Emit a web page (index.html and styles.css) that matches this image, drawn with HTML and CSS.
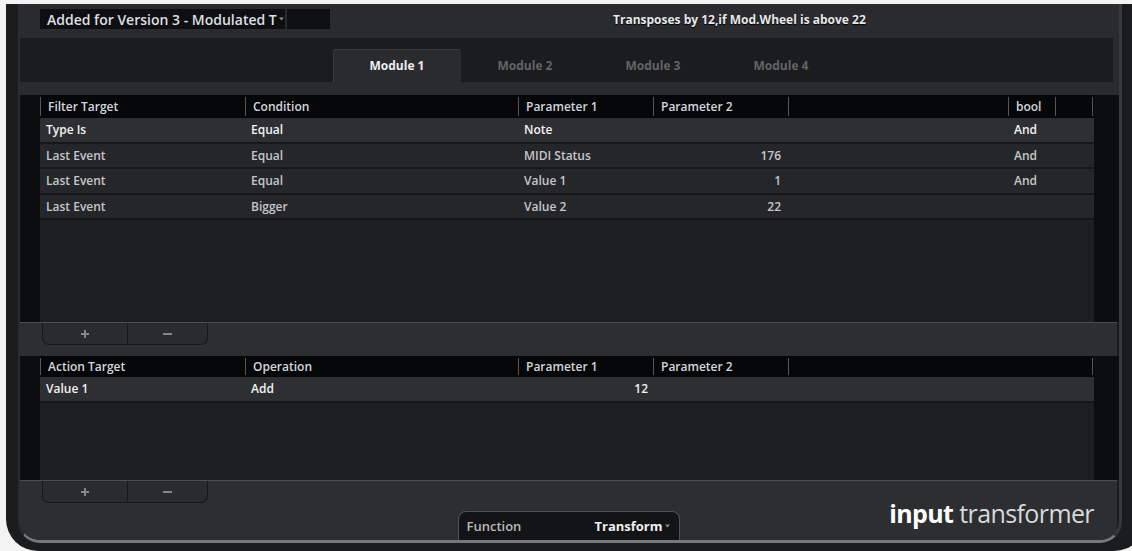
FILE: index.html
```html
<!DOCTYPE html>
<html>

<head>
    <title>Input Transformer</title>
    <meta content="width=device-width, initial-scale=1" name="viewport" />
    <meta http-equiv="Content-Type" content="text/html; charset=utf-8" />
    <link rel="stylesheet" href="styles.css">
</head>

<body>
    <div class="frame">
        <div class="panel">
            <div class="topbar">
                <div class="preset">
                    <span class="preset-name">Added for Version 3 - Modulated T</span>
                    <svg class="arrow" width="5" height="4" viewBox="0 0 5 4"><path d="M0 0.5h5L2.5 3.5z" fill="#8c8d90"/></svg>
                </div>
                <div class="preset-extra"></div>
                <div class="preset-info">Transposes by 12,if Mod.Wheel is above 22</div>
            </div>

            <div class="modules">
                <div class="tabs">
                    <div class="tab active">Module 1</div>
                    <div class="tab">Module 2</div>
                    <div class="tab">Module 3</div>
                    <div class="tab">Module 4</div>
                </div>
            </div>
            <div class="spacer"></div>

            <!-- filter conditions -->
            <div class="list filter">
                <div class="row head cols-filter">
                    <div class="cell">Filter Target</div>
                    <div class="cell">Condition</div>
                    <div class="cell">Parameter 1</div>
                    <div class="cell">Parameter 2</div>
                    <div class="cell"></div>
                    <div class="cell">bool</div>
                    <div class="cell last"></div>
                </div>
                <div class="body">
                    <div class="row item sel cols-filter">
                        <div class="cell">Type Is</div>
                        <div class="cell">Equal</div>
                        <div class="cell">Note</div>
                        <div class="cell num"></div>
                        <div class="cell"></div>
                        <div class="cell">And</div>
                        <div class="cell"></div>
                    </div>
                    <div class="row item cols-filter">
                        <div class="cell">Last Event</div>
                        <div class="cell">Equal</div>
                        <div class="cell">MIDI Status</div>
                        <div class="cell num">176</div>
                        <div class="cell"></div>
                        <div class="cell">And</div>
                        <div class="cell"></div>
                    </div>
                    <div class="row item cols-filter">
                        <div class="cell">Last Event</div>
                        <div class="cell">Equal</div>
                        <div class="cell">Value 1</div>
                        <div class="cell num">1</div>
                        <div class="cell"></div>
                        <div class="cell">And</div>
                        <div class="cell"></div>
                    </div>
                    <div class="row item cols-filter">
                        <div class="cell">Last Event</div>
                        <div class="cell">Bigger</div>
                        <div class="cell">Value 2</div>
                        <div class="cell num">22</div>
                        <div class="cell"></div>
                        <div class="cell"></div>
                        <div class="cell"></div>
                    </div>
                </div>
            </div>

            <div class="toolbar">
                <div class="btns">
                    <div class="btn">
                        <svg width="8" height="8" viewBox="0 0 8 8"><path d="M4 0v8M0 4h8" stroke="#85868a" stroke-width="2"/></svg>
                    </div>
                    <div class="btn minus">
                        <svg width="9" height="2" viewBox="0 0 9 2"><path d="M0 1h9" stroke="#85868a" stroke-width="2"/></svg>
                    </div>
                </div>
            </div>

            <!-- actions -->
            <div class="list action">
                <div class="row head cols-action">
                    <div class="cell">Action Target</div>
                    <div class="cell">Operation</div>
                    <div class="cell">Parameter 1</div>
                    <div class="cell">Parameter 2</div>
                    <div class="cell last"></div>
                </div>
                <div class="body">
                    <div class="row item sel short cols-action">
                        <div class="cell">Value 1</div>
                        <div class="cell">Add</div>
                        <div class="cell num tight">12</div>
                        <div class="cell"></div>
                        <div class="cell"></div>
                    </div>
                </div>
            </div>

            <div class="footer">
                <div class="btns">
                    <div class="btn">
                        <svg width="8" height="8" viewBox="0 0 8 8"><path d="M4 0v8M0 4h8" stroke="#85868a" stroke-width="2"/></svg>
                    </div>
                    <div class="btn minus">
                        <svg width="9" height="2" viewBox="0 0 9 2"><path d="M0 1h9" stroke="#85868a" stroke-width="2"/></svg>
                    </div>
                </div>
                <div class="func">
                    <span>Function</span>
                    <span class="func-value">Transform<svg class="arrow" width="5" height="4" viewBox="0 0 5 4"><path d="M0 0.5h5L2.5 3.5z" fill="#8c8d90"/></svg></span>
                </div>
                <div class="logo"><b>input</b> transformer</div>
            </div>
        </div>
    </div>
</body>

</html>
```

FILE: styles.css
```css
* {
    margin: 0;
    padding: 0;
    box-sizing: border-box;
}

html,
body {
    background: #f3f3f3;
    font-family: "Open Sans", "Liberation Sans", sans-serif;
    font-size: 12px;
    font-weight: 600;
    overflow: hidden;
}

.frame {
    background: #1b1c1e;
    border-radius: 0 0 32px 32px;
    height: 547px;
    margin: 4px 0 0 6px;
    padding: 0 0 8px 12px;
    width: 1140px;
}

.panel {
    border-bottom: 3px solid #77787b;
    border-left: 2px solid #2a2b2d;
    border-right: 3px solid #38393b;
    border-radius: 0 0 22px 22px;
    display: flex;
    flex-direction: column;
    height: 539px;
    overflow: hidden;
    width: 1104px;
}

/* preset bar */
.topbar {
    align-items: flex-start;
    background: #2a2b2e;
    display: flex;
    height: 34px;
    padding: 5px 0 0 20px;
}

.preset {
    align-items: center;
    background: #0e0f11;
    display: flex;
    height: 20px;
    padding-left: 7px;
    width: 245px;
}

.preset-name {
    color: #dedfe2;
    font-size: 14px;
    white-space: nowrap;
}

.arrow {
    margin-left: 2px;
}

.preset-extra {
    background: #0e0f11;
    height: 20px;
    margin-left: 2px;
    width: 43px;
}

.preset-info {
    color: #e8e8ea;
    font-weight: 700;
    line-height: 22px;
    margin-left: 283px;
    text-shadow: 0 1px 1px #000;
}

/* module tabs */
.modules {
    background: #2a2b2e;
    height: 44px;
    padding-right: 6px;
}

.tabs {
    align-items: flex-end;
    background: #1b1c1f;
    display: flex;
    height: 100%;
    padding-left: 313px;
}

.tab {
    align-items: center;
    color: #626367;
    display: flex;
    font-weight: 700;
    height: 33px;
    justify-content: center;
    width: 128px;
}

.tab.active {
    background: #2a2b2e;
    border-radius: 3px 3px 0 0;
    box-shadow: inset 1px 1px 0 #3a3b3f;
    color: #eeeeef;
}

.spacer {
    background: #2a2b2e;
    height: 13px;
}

/* lists */
.list {
    background: #0c0d0f;
    display: flex;
    flex-direction: column;
    padding: 0 25px 0 20px;
}

.list.filter {
    height: 227px;
}

.list.action {
    height: 124px;
}

.list .body {
    background: #1d1e21;
    flex: 1;
}

.row {
    display: grid;
}

.cols-filter {
    grid-template-columns: 205px 273px 135px 135px 220px 47px 38px;
}

.cols-action {
    grid-template-columns: 205px 273px 135px 135px 305px;
}

.head {
    background: #060708;
    color: #d3d6de;
    height: 23px;
    padding: 2px 0;
}

.action .head {
    height: 21px;
}

.head .cell {
    border-left: 1px solid #55565a;
    line-height: 19px;
    padding-left: 7px;
}

.action .head .cell {
    line-height: 17px;
}

.head .cell.last {
    border-right: 1px solid #55565a;
}

.item {
    background: #25262a;
    border-bottom: 2px solid #16171a;
    color: #c6c7ca;
    height: 25.5px;
}

.item.short {
    height: 26px;
}

.item.sel {
    background: #2e2f32;
    color: #f2f2f3;
}

.item .cell {
    line-height: 23px;
    padding-left: 6px;
    white-space: nowrap;
}

.item .cell.num {
    padding: 0 7px 0 0;
    text-align: right;
}

.item .cell.tight {
    padding-right: 5px;
}

/* button strips */
.toolbar,
.footer {
    background: #2d2e31;
    border-top: 1px solid #4c4d50;
    margin-right: 2px;
}

.toolbar {
    height: 34px;
}

.btns {
    display: flex;
    margin-left: 22px;
}

.btn {
    align-items: center;
    background: #2a2b2e;
    border: 1px solid #17181a;
    border-radius: 0 0 0 7px;
    border-top: none;
    display: flex;
    height: 22px;
    justify-content: center;
    width: 86px;
}

.btn.minus {
    border-left: none;
    border-radius: 0 0 7px 0;
    width: 80px;
}

.footer {
    display: grid;
    grid-template-columns: 1fr auto 1fr;
    height: 60px;
}

.footer .btns {
    align-self: start;
}

.func {
    align-items: center;
    align-self: end;
    background: #131416;
    border: 1px solid #505154;
    border-bottom: none;
    border-radius: 8px 8px 0 0;
    color: #b8b9bc;
    display: flex;
    font-size: 13px;
    height: 29px;
    justify-content: space-between;
    padding: 0 9px 0 8px;
    width: 222px;
}

.func-value {
    align-items: center;
    color: #f0f0f0;
    display: flex;
    font-weight: 700;
}

.logo {
    align-self: end;
    color: #d8d9db;
    font-size: 25px;
    font-weight: 400;
    justify-self: end;
    letter-spacing: -0.6px;
    line-height: 24px;
    margin: 0 23px 15px 0;
    white-space: nowrap;
}

.logo b {
    color: #ffffff;
    font-weight: 700;
}
```
